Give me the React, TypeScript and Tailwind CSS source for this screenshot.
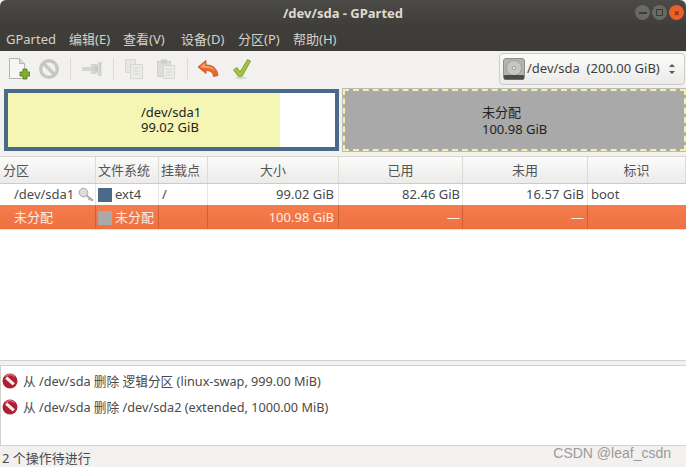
const font = "[font-family:'Noto_Sans','Noto_Sans_CJK_SC',sans-serif]";

const cols = "grid grid-cols-[96px_63px_49px_131px_124px_125px_98px]";

function NewIcon() {
  return (
    <svg width="22" height="24" viewBox="0 0 22 24">
      <path d="M1.500 1.500h10l5 5v15h-15z" fill="#f6f6f4" stroke="#b5b5b1" />
      <path d="M11.500 1.500v5h5" fill="#dcdcd8" stroke="#b5b5b1" />
      <path d="M12 15h3v-3h4v3h3v4h-3v3h-4v-3h-3z" fill="#7fb02c" stroke="#4f7a12" strokeWidth="0.8" />
    </svg>
  );
}
function StopIcon() {
  return (
    <svg width="22" height="22" viewBox="0 0 22 22">
      <circle cx="10" cy="11" r="8.300" fill="none" stroke="#c6c6c3" strokeWidth="3.400" />
      <path d="M4.500 5.500l11 11" stroke="#c6c6c3" strokeWidth="3.400" />
    </svg>
  );
}
function ResizeIcon() {
  return (
    <svg width="22" height="18" viewBox="0 0 22 18">
      <path d="M1 7h9V4h5v10h-5v-3H1z" fill="#d3d3d0" />
      <path d="M13 8l4-5v12z" fill="#c9c9c6" />
      <path d="M17.500 2h3v14h-3z" fill="#cfcfcc" />
    </svg>
  );
}
function CopyIcon() {
  return (
    <svg width="20" height="22" viewBox="0 0 20 22">
      <path d="M1.500 1.500h10v13h-10z" fill="#e6e6e3" stroke="#d6d6d3" />
      <path d="M6.500 6.500h12v14h-12z" fill="#ecebe9" stroke="#d6d6d3" />
      <path d="M9 10h7M9 13h7M9 16h7" stroke="#d6d6d3" />
    </svg>
  );
}
function PasteIcon() {
  return (
    <svg width="20" height="22" viewBox="0 0 20 22">
      <path d="M1.500 3.500h13v15h-13z" fill="#dcdcd9" stroke="#d0d0cd" />
      <path d="M5 1.500h6v4H5z" fill="#cdcdca" />
      <path d="M7.500 7.500h11v13h-11z" fill="#ecebe9" stroke="#d6d6d3" />
      <path d="M10 11h6M10 14h6M10 17h6" stroke="#d6d6d3" />
    </svg>
  );
}
function UndoIcon() {
  return (
    <svg width="22" height="20" viewBox="0 0 22 20">
      <path d="M1 8l8-6.500v4.500c6 0 11 2.500 12 10.500l-4.500 1c-.5-4-3-6-7.500-6v3z" fill="#e8672a" stroke="#c9521c" strokeWidth="0.8" strokeLinejoin="round" />
      <path d="M3 8l5-4v3c5 0 8 1.500 10 5-3-2.500-6-3-10-3z" fill="#f3a678" />
    </svg>
  );
}
function CheckIcon() {
  return (
    <svg width="20" height="22" viewBox="0 0 20 22">
      <path d="M1.500 12l3.500-2.500 3 4.500L15.500 1.500l3 1.500-8.500 15.500H6.500z" fill="#a3c440" stroke="#6f9420" strokeWidth="0.8" strokeLinejoin="round" />
      <ellipse cx="9" cy="20" rx="6" ry="1.200" fill="#d5d5d2" />
    </svg>
  );
}
function DiskIcon() {
  return (
    <svg width="22" height="22" viewBox="0 0 22 22">
      <rect x="0.500" y="0.500" width="21" height="21" rx="2.500" fill="#b2b2ae" stroke="#8e8e8a" />
      <circle cx="11" cy="10" r="7.500" fill="#c6c6c2" stroke="#a0a09c" />
      <circle cx="11" cy="10" r="1.800" fill="#dededa" stroke="#a0a09c" />
      <rect x="1" y="17" width="20" height="4.500" rx="1" fill="#4a4a46" />
    </svg>
  );
}
function KeyIcon() {
  return (
    <svg width="16" height="15" viewBox="0 0 16 15">
      <circle cx="5.500" cy="5.500" r="4.300" fill="#dcdcd8" stroke="#a8a8a4" />
      <path d="M8.500 8.500l6.500 5M12 11l-1.500 2M14 12.500l-1 1.500" stroke="#a8a8a4" strokeWidth="1.600" fill="none" />
    </svg>
  );
}
function DeleteIcon() {
  return (
    <svg width="16" height="16" viewBox="0 0 16 16">
      <circle cx="8" cy="8" r="7.500" fill="#b01f34" />
      <path d="M3.500 3.500a6.500 6.500 0 0 1 9 0" fill="none" stroke="#d9707e" strokeWidth="1.200" />
      <path d="M4.200 4.600l7.600 6.800" stroke="#f4f0f0" strokeWidth="3.200" />
    </svg>
  );
}

const Sep = () => <div className="w-px h-[21px] bg-[#dcdad7]" />;

const headers: [string, string][] = [
  ["分区", "justify-start pl-[3px]"],
  ["文件系统", "justify-start pl-[2px]"],
  ["挂载点", "justify-start pl-[2px]"],
  ["大小", "justify-center"],
  ["已用", "justify-center"],
  ["未用", "justify-center"],
  ["标识", "justify-center"],
];

export default function App() {
  return (
    <div className={`w-[686px] h-[467px] flex flex-col overflow-hidden bg-[#f2f1f0] text-[13px] leading-none text-[#3c3c3c] ${font}`}>
      {/* Title + menu */}
      <div className="h-[51px] shrink-0 flex flex-col bg-gradient-to-b from-[#4b4a46] via-[#3f3e3a] to-[#3c3b37] rounded-t-[6px]">
        <div className="h-[26px] relative flex items-center justify-center">
          <span className="font-bold text-[#dfdbd2] text-[13px]">/dev/sda - GParted</span>
          <div className="absolute right-[2px] top-[5px] flex items-center gap-[2px]">
            <span className="w-[15px] h-[15px] rounded-full bg-[#6a6a65] flex items-center justify-center">
              <span className="w-[8px] h-[2px] bg-[#3c3b37]" />
            </span>
            <span className="w-[15px] h-[15px] rounded-full bg-[#6a6a65] flex items-center justify-center">
              <span className="w-[7px] h-[7px] border border-[#3c3b37]" />
            </span>
            <span className="w-[15px] h-[15px] rounded-full bg-[#ee5e2a] flex items-center justify-center text-[#7a2c10] text-[10px] font-bold">×</span>
          </div>
        </div>
        <div className="h-[25px] flex items-center pl-[6px] text-[#d5d2ca] text-[13px] pt-[1px]">
          <span className="w-[63px]">GParted</span>
          <span className="w-[54px]">编辑(E)</span>
          <span className="w-[58px]">查看(V)</span>
          <span className="w-[57px]">设备(D)</span>
          <span className="w-[55px]">分区(P)</span>
          <span>帮助(H)</span>
        </div>
      </div>

      {/* Toolbar */}
      <div className="h-[37px] shrink-0 flex items-center pl-[8px] pr-[1px] pb-[2px]">
        <NewIcon />
        <div className="ml-[9px]"><StopIcon /></div>
        <div className="ml-[9px]"><Sep /></div>
        <div className="ml-[10px]"><ResizeIcon /></div>
        <div className="ml-[10px]"><Sep /></div>
        <div className="ml-[10px]"><CopyIcon /></div>
        <div className="ml-[12px]"><PasteIcon /></div>
        <div className="ml-[11px]"><Sep /></div>
        <div className="ml-[9px]"><UndoIcon /></div>
        <div className="ml-[13px]"><CheckIcon /></div>
        <div className="ml-auto w-[186px] h-[32px] rounded-[4px] border border-[#cfcdca] bg-gradient-to-b from-[#fbfbfa] to-[#ecebe9] flex items-center pl-[3px] pr-[9px] text-[13px]">
          <DiskIcon />
          <span className="ml-[2px] whitespace-pre">/dev/sda  (200.00 GiB)</span>
          <span className="ml-auto flex flex-col items-center gap-[4px]">
            <span className="w-0 h-0 border-x-[3px] border-x-transparent border-b-[3px] border-b-[#555]" />
            <span className="w-0 h-0 border-x-[3px] border-x-transparent border-t-[3px] border-t-[#555]" />
          </span>
        </div>
      </div>

      {/* Disk graph */}
      <div className="h-[69px] shrink-0 flex gap-[4px] pl-[4px] pt-[1px] pb-[5px] border-b border-[#d8d6d2]">
        <div className="w-[335px] border-[4px] border-[#4a6a8a] bg-white flex">
          <div className="w-[272px] bg-[#f6f6b4] flex flex-col justify-center pl-[133px] text-[#222] gap-[2px] whitespace-nowrap">
            <div>/dev/sda1</div>
            <div>99.02 GiB</div>
          </div>
        </div>
        <div className="flex-1 bg-[#a9a9a9] border-[2px] border-dashed border-[#f2f2a8] flex flex-col justify-center pl-[137px] pt-[2px] text-[#222] gap-[4px] whitespace-nowrap outline outline-1 outline-[#bcbcb8]">
          <div>未分配</div>
          <div>100.98 GiB</div>
        </div>
      </div>

      {/* Table */}
      <div className="h-[203px] shrink-0 bg-white flex flex-col">
        <div className={`${cols} h-[27px] bg-gradient-to-b from-[#fbfbfb] to-[#ecebe9] border-b border-[#cdcbc8] text-[#555]`}>
          {headers.map(([t, c]) => (
            <div key={t} className={`flex items-center border-r border-[#dddbd8] ${c}`}>{t}</div>
          ))}
        </div>
        <div className={`${cols} h-[21px] items-stretch text-[#4a4a4a]`}>
          <div className="flex items-center pl-[14px] pr-[1px] justify-between border-r border-[#e8e7e5]">
            <span>/dev/sda1</span>
            <KeyIcon />
          </div>
          <div className="flex items-center pl-[2px] gap-[3px] border-r border-[#e8e7e5]">
            <span className="w-[14px] h-[14px] bg-[#4a6a8a]" />
            <span>ext4</span>
          </div>
          <div className="flex items-center pl-[3px] border-r border-[#e8e7e5]">/</div>
          <div className="flex items-center justify-end pr-[4px] border-r border-[#e8e7e5]">99.02 GiB</div>
          <div className="flex items-center justify-end pr-[2px] border-r border-[#e8e7e5]">82.46 GiB</div>
          <div className="flex items-center justify-end pr-[3px] border-r border-[#e8e7e5]">16.57 GiB</div>
          <div className="flex items-center pl-[3px]">boot</div>
        </div>
        <div className={`${cols} h-[25px] items-stretch text-[#fbeee6] bg-gradient-to-b from-[#f47c4c] to-[#ee7040] border-b border-[#f6ddd2]`}>
          <div className="flex items-center pl-[14px] pt-[1px] border-r border-[#cf6035]">未分配</div>
          <div className="flex items-center pl-[2px] pt-[1px] gap-[3px] border-r border-[#cf6035]">
            <span className="w-[14px] h-[14px] bg-[#a9a9a9]" />
            <span>未分配</span>
          </div>
          <div className="border-r border-[#cf6035]" />
          <div className="flex items-center justify-end pr-[4px] pt-[1px] border-r border-[#cf6035]">100.98 GiB</div>
          <div className="flex items-center justify-end pr-[2px] border-r border-[#cf6035]">—</div>
          <div className="flex items-center justify-end pr-[3px] border-r border-[#cf6035]">—</div>
          <div />
        </div>
      </div>

      {/* Pane divider */}
      <div className="h-[6px] shrink-0 bg-[#f2f1f0] border-t border-b border-[#d3d1cd]" />

      {/* Log */}
      <div className="h-[79px] shrink-0 bg-white pt-[2px] border-l border-[#d3d1cd]">
        {["从 /dev/sda 删除 逻辑分区 (linux-swap, 999.00 MiB)", "从 /dev/sda 删除 /dev/sda2 (extended, 1000.00 MiB)"].map((t) => (
          <div key={t} className="h-[26px] flex items-center gap-[5px] pl-[1px]">
            <DeleteIcon />
            <span className="text-[#4a4a4a] text-[12.700px]">{t}</span>
          </div>
        ))}
      </div>

      {/* Status */}
      <div className="flex-1 border-t border-[#d3d1cd] flex items-center pl-[2px] pr-[2px] text-[#4a4a4a] relative">
        <span className="mt-[3px]">2 个操作待进行</span>
        <span className="absolute right-[15px] top-[0px] text-[14px] text-[#9a9a9a] [font-family:'Liberation_Sans',sans-serif]">CSDN @leaf_csdn</span>
      </div>
    </div>
  );
}
